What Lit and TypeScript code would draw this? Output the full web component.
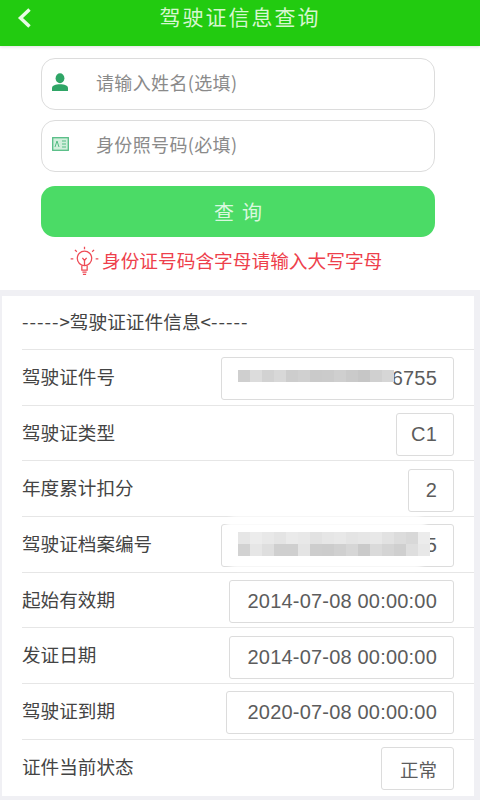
import { LitElement, html, css } from "lit";
import { customElement } from "lit/decorators.js";

interface Row { label: string; value: string; }

const G1 = ["#cfcfcf", "#dcdcdc", "#d2d2d2", "#d8d8d8", "#cdcdcd", "#d0d0d0", "#cacaca", "#cbcbcb", "#cfcfcf", "#cacaca", "#c6c6c6", "#d0d0d0", "#d6d6d6"];
const G2 = ["#d2d2d2", "#e6e6e6", "#dedede", "#cfcfcf", "#cfcfcf", "#e4e4e4", "#cdcdcd", "#cccccc", "#d0d0d0", "#d6d6d6", "#cacaca", "#dadada", "#d4d4d4", "#cfcfcf", "#dedede", "#e8e8e8"];
const G3 = ["#e6e6e6", "#ececec", "#e8e8e8", "#e4e4e4", "#eaeaea", "#e8e8e8", "#e2e2e2", "#e6e6e6", "#e8e8e8", "#e4e4e4", "#e6e6e6", "#e8e8e8", "#e2e2e2", "#dcdcdc", "#d8d8d8", "#ececec"];

@customElement("app-root")
export class AppRoot extends LitElement {
  static styles = css`
    :host { display: block; width: 480px; height: 800px; overflow: hidden; background: #f0f0f4; font-family: "Noto Sans CJK SC", "Liberation Sans", sans-serif; }
  `;
  render() { return html`<driver-page></driver-page>`; }
}

@customElement("driver-page")
export class DriverPage extends LitElement {
  static styles = css`
    :host { display: block; font-family: "Noto Sans CJK SC", "Liberation Sans", sans-serif; }
    .bar { height: 46px; background: #22cb10; position: relative; display: flex; align-items: center; justify-content: center; color: #d6f7cf; font-size: 21px; letter-spacing: 2px; padding-bottom: 15px; box-sizing: border-box; box-shadow: 0 1px 3px rgba(0,0,0,.12); }
    .back { position: absolute; left: 17px; top: 8px; width: 15px; height: 20px; }
    .form { background: #fff; height: 244px; padding: 12px 45px 0 41px; box-sizing: border-box; display: flex; flex-direction: column; }
    .field { height: 52px; border: 1.5px solid #dcdcdc; border-radius: 14px; box-sizing: border-box; display: flex; align-items: center; color: #8a8a8a; font-size: 18px; letter-spacing: .35px; margin-bottom: 10px; flex: none; padding-bottom: 5px; }
    .field .ic { width: 54px; display: flex; justify-content: flex-start; padding-left: 10px; box-sizing: border-box; }
    .btn { height: 51px; margin-top: 4px; background: #4bdb66; border-radius: 14px; display: flex; align-items: center; justify-content: center; color: #d9f8df; font-size: 20px; letter-spacing: 8px; padding-left: 8px; box-sizing: border-box; flex: none; }
    .tip { display: flex; align-items: center; justify-content: flex-start; margin-left: 27px; margin-top: 8px; color: #ee3f4c; font-size: 18.7px; line-height: 30px; white-space: nowrap; height: 30px; }
    .tip svg { width: 33px; height: 33px; margin-right: 1px; flex: none; }
    .card { margin: 6px 6px 0 2px; background: #fff; padding-left: 20px; }
    .title { height: 54px; display: flex; align-items: center; color: #444; font-size: 18.7px; border-bottom: 1px solid #e6e6e6; box-sizing: border-box; padding-bottom: 4px; white-space: nowrap; }
    .dash { letter-spacing: 1px; }
    .row { height: 55.7px; box-sizing: border-box; display: flex; align-items: center; justify-content: space-between; border-bottom: 1px solid #e6e6e6; padding-right: 20px; padding-bottom: 4px; color: #444; font-size: 18.6px; }
    .row:last-child { border-bottom-color: transparent; }
    .box { position: relative; height: 43px; border: 1.5px solid #dcdcdc; border-radius: 3px; box-sizing: border-box; display: flex; align-items: center; justify-content: flex-end; padding: 0 16px; color: #5c5c5c; font-size: 20px; font-family: "Liberation Sans", sans-serif; letter-spacing: .2px; white-space: nowrap; margin-top: 7px; }
    .zh { font-family: "Noto Sans CJK SC", sans-serif; font-size: 18.5px; letter-spacing: 0; }
    .veil { position: absolute; background: rgba(255,255,255,.85); border-radius: 12px; filter: blur(2px); }
    .mosaic { position: absolute; display: flex; flex-direction: column; filter: blur(.7px); }
    .mline { display: flex; height: 12px; }
    .mline i { display: block; width: 12px; height: 100%; }
  `;

  private tiles(colours: string[]) {
    return html`<div class="mline">${colours.map((c) => html`<i style="background:${c}"></i>`)}</div>`;
  }

  render() {
    const rows: Row[] = [
      { label: "驾驶证类型", value: "C1" },
      { label: "年度累计扣分", value: "2" },
    ];
    return html`
      <div class="bar">
        <svg class="back" viewBox="0 0 15 20"><path d="M12.5 1.5 L3.5 10 L12.5 18.5" fill="none" stroke="#e8fbe4" stroke-width="3.5"/></svg>
        驾驶证信息查询
      </div>
      <div class="form">
        <div class="field">
          <span class="ic"><svg width="16" height="18" viewBox="0 0 16 18"><ellipse cx="8" cy="5.2" rx="4.4" ry="5" fill="#2fa566"/><path d="M0 18 v-3 c0-2.6 3.6-3.8 8-3.8 s8 1.2 8 3.8 v3 z" fill="#2fa566"/></svg></span>
          请输入姓名(选填)
        </div>
        <div class="field">
          <span class="ic"><svg width="17" height="14" viewBox="0 0 17 14"><rect x=".7" y=".7" width="15.6" height="12.6" fill="#d2efdc" stroke="#55bd85" stroke-width="1.3"/><path d="M3 10 L5 4 L7 10 M10 4 h4 M10 7 h4 M10 10 h4" fill="none" stroke="#55bd85" stroke-width="1"/></svg></span>
          身份照号码(必填)
        </div>
        <div class="btn">查询</div>
        <div class="tip">
          <svg viewBox="0 0 31 31" fill="none" stroke="#ee4a55" stroke-width="1.2">
            <circle cx="15.5" cy="13.5" r="6.8"/>
            <path d="M13 20.5 v4 h5 v-4 M13.5 26.5 h4 M14 28.5 h3 M13.5 13 l2 2.5 2-2.5 M15.5 15.5 v5" />
            <path d="M15.5 2.5 v2.5 M6.5 5.5 l1.8 1.8 M24.5 5.5 l-1.8 1.8 M2.5 14 h2.5 M26 14 h2.5" />
          </svg>
          身份证号码含字母请输入大写字母
        </div>
      </div>
      <div class="card">
        <div class="title"><span class="dash">-----</span>&gt;驾驶证证件信息&lt;<span class="dash">-----</span></div>
        <div class="row">
          <span>驾驶证件号</span>
          <div class="box" style="width:233px">
            6755
            <div class="veil" style="left:16px;top:24px;width:62px;height:11px"></div>
            <div class="mosaic" style="left:15.5px;top:12px">${this.tiles(G1)}</div>
          </div>
        </div>
        ${rows.map((r, i) => html`
          <div class="row">
            <span>${r.label}</span>
            <div class="box" style="width:${i === 0 ? 58 : 46}px">${r.value}</div>
          </div>`)}
        <div class="row">
          <span>驾驶证档案编号</span>
          <div class="box" style="width:233px">
            5
            <div class="veil" style="left:4px;top:-10px;width:200px;height:54px"></div>
            <div class="mosaic" style="left:15.5px;top:7px">
              ${this.tiles(G3)}
              ${this.tiles(G2)}
            </div>
          </div>
        </div>
        <div class="row"><span>起始有效期</span><div class="box" style="width:225px">2014-07-08 00:00:00</div></div>
        <div class="row"><span>发证日期</span><div class="box" style="width:225px">2014-07-08 00:00:00</div></div>
        <div class="row"><span>驾驶证到期</span><div class="box" style="width:228px">2020-07-08 00:00:00</div></div>
        <div class="row"><span>证件当前状态</span><div class="box" style="width:73px"><span class="zh">正常</span></div></div>
      </div>
    `;
  }
}
